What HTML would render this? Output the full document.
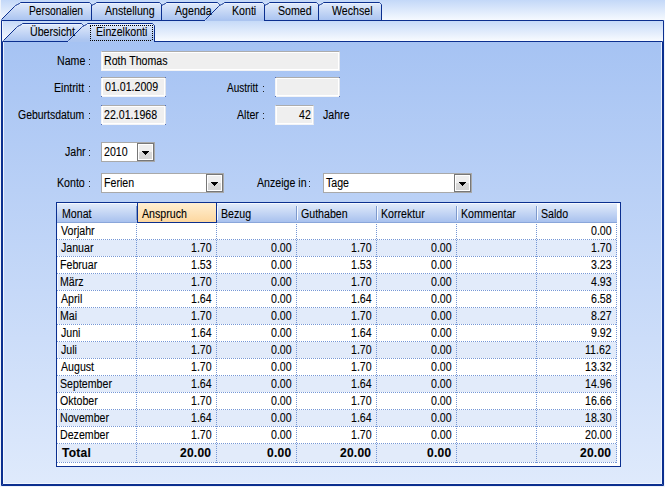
<!DOCTYPE html><html><head><meta charset="utf-8"><style>
*{box-sizing:border-box}
html,body{margin:0;padding:0;width:665px;height:487px;overflow:hidden;background:#dfe9f9}
body{position:relative;font-family:"Liberation Sans",sans-serif;font-size:12px;color:#000}
.t{position:absolute;line-height:13px;white-space:nowrap;transform:scaleX(0.885);transform-origin:0 0;-webkit-text-stroke:0.1px #000}
.abs{position:absolute}
.ro{position:absolute;background:#efefef;border:1px solid #f3f4f6;border-top-color:#acacac;border-right-color:#e2e5ea;box-shadow:inset 1px 1px 0 #fff,inset -1px -1px 0 #fff}
.cb{position:absolute;background:#fff;border:1px solid #a9a9a9}
.btn{position:absolute;top:0;right:0;width:17px;bottom:0;border:1px solid #777;background:linear-gradient(#efefef 0,#efefef 48%,#d9d9d9 52%,#d4d4d4 100%);box-shadow:inset 0 0 0 1px #fff}
.arr{position:absolute;left:4px;width:7px;height:4px}
</style></head><body>
<div class="abs" style="left:0;top:0;width:665px;height:21px;background:linear-gradient(#c3d8f8,#f8fbff)"></div>
<div class="abs" style="left:0;top:21px;width:665px;height:21px;background:linear-gradient(#c6daf8,#fafcff)"></div>
<div class="abs" style="left:0;top:42px;width:665px;height:445px;background:linear-gradient(#a6c3f3,#dfeafc)"></div>
<svg class="abs" style="left:0;top:0" width="665" height="487" viewBox="0 0 665 487"><defs><linearGradient id="tg" x1="0" y1="0" x2="0" y2="1"><stop offset="0" stop-color="#e2ebfb"/><stop offset="1" stop-color="#a9c3f0"/></linearGradient></defs><path d="M304.5,19.5 L317.5,6.5 L318.5,5.5 L320.5,4.5 L322.5,3.5 L323.5,2.5 L379.5,2.5 L380.5,3.5 L381.5,4.5 L381.5,20.5 L304.5,20.5 Z" fill="url(#tg)"/><path d="M323.5,3.5 L378.5,3.5" stroke="#ebf2fd" stroke-width="1" fill="none"/><path d="M304.5,19.5 L317.5,6.5 L318.5,5.5 L320.5,4.5 L322.5,3.5 L323.5,2.5 L379.5,2.5 L380.5,3.5 L381.5,4.5 L381.5,20.5" fill="none" stroke="#0b2f8f" stroke-width="1"/><path d="M250.5,19.5 L263.5,6.5 L264.5,5.5 L266.5,4.5 L268.5,3.5 L269.5,2.5 L316.5,2.5 L317.5,3.5 L318.5,4.5 L318.5,20.5 L250.5,20.5 Z" fill="url(#tg)"/><path d="M269.5,3.5 L315.5,3.5" stroke="#ebf2fd" stroke-width="1" fill="none"/><path d="M250.5,19.5 L263.5,6.5 L264.5,5.5 L266.5,4.5 L268.5,3.5 L269.5,2.5 L316.5,2.5 L317.5,3.5 L318.5,4.5 L318.5,20.5" fill="none" stroke="#0b2f8f" stroke-width="1"/><path d="M147.5,19.5 L160.5,6.5 L161.5,5.5 L163.5,4.5 L165.5,3.5 L166.5,2.5 L217.5,2.5 L218.5,3.5 L219.5,4.5 L219.5,20.5 L147.5,20.5 Z" fill="url(#tg)"/><path d="M166.5,3.5 L216.5,3.5" stroke="#ebf2fd" stroke-width="1" fill="none"/><path d="M147.5,19.5 L160.5,6.5 L161.5,5.5 L163.5,4.5 L165.5,3.5 L166.5,2.5 L217.5,2.5 L218.5,3.5 L219.5,4.5 L219.5,20.5" fill="none" stroke="#0b2f8f" stroke-width="1"/><path d="M77.5,19.5 L90.5,6.5 L91.5,5.5 L93.5,4.5 L95.5,3.5 L96.5,2.5 L159.5,2.5 L160.5,3.5 L161.5,4.5 L161.5,20.5 L77.5,20.5 Z" fill="url(#tg)"/><path d="M96.5,3.5 L158.5,3.5" stroke="#ebf2fd" stroke-width="1" fill="none"/><path d="M77.5,19.5 L90.5,6.5 L91.5,5.5 L93.5,4.5 L95.5,3.5 L96.5,2.5 L159.5,2.5 L160.5,3.5 L161.5,4.5 L161.5,20.5" fill="none" stroke="#0b2f8f" stroke-width="1"/><path d="M1.5,19.5 L14.5,6.5 L15.5,5.5 L17.5,4.5 L19.5,3.5 L20.5,2.5 L89.5,2.5 L90.5,3.5 L91.5,4.5 L91.5,20.5 L1.5,20.5 Z" fill="url(#tg)"/><path d="M20.5,3.5 L88.5,3.5" stroke="#ebf2fd" stroke-width="1" fill="none"/><path d="M1.5,19.5 L14.5,6.5 L15.5,5.5 L17.5,4.5 L19.5,3.5 L20.5,2.5 L89.5,2.5 L90.5,3.5 L91.5,4.5 L91.5,20.5" fill="none" stroke="#0b2f8f" stroke-width="1"/><path d="M205.5,19.5 L218.5,6.5 L219.5,5.5 L221.5,4.5 L223.5,3.5 L224.5,2.5 L262.5,2.5 L263.5,3.5 L264.5,4.5 L264.5,20.5 L205.5,20.5 Z" fill="url(#tg)"/><path d="M224.5,3.5 L261.5,3.5" stroke="#ebf2fd" stroke-width="1" fill="none"/><path d="M205.5,19.5 L218.5,6.5 L219.5,5.5 L221.5,4.5 L223.5,3.5 L224.5,2.5 L262.5,2.5 L263.5,3.5 L264.5,4.5 L264.5,20.5" fill="none" stroke="#0b2f8f" stroke-width="1"/><rect x="206" y="20" width="58" height="1" fill="#abc4f0"/><path d="M205,20.5 L1.5,20.5 L1.5,485.5 L663.5,485.5 L663.5,20.5 L264,20.5" fill="none" stroke="#0b2f8f"/><path d="M2.5,21 L2.5,41" stroke="#eef4fe" fill="none"/><rect x="0" y="0" width="1" height="487" fill="#eef3fb"/><rect x="664" y="20" width="1" height="467" fill="#eef3fb"/><rect x="0" y="486" width="665" height="1" fill="#eef3fb"/><path d="M3.5,40.5 L16.5,27.5 L17.5,26.5 L19.5,25.5 L21.5,24.5 L22.5,23.5 L81.5,23.5 L82.5,24.5 L83.5,25.5 L83.5,41.5 L3.5,41.5 Z" fill="url(#tg)"/><path d="M22.5,24.5 L80.5,24.5" stroke="#ebf2fd" stroke-width="1" fill="none"/><path d="M3.5,40.5 L16.5,27.5 L17.5,26.5 L19.5,25.5 L21.5,24.5 L22.5,23.5 L81.5,23.5 L82.5,24.5 L83.5,25.5 L83.5,41.5" fill="none" stroke="#0b2f8f" stroke-width="1"/><path d="M68.5,40.5 L81.5,27.5 L82.5,26.5 L84.5,25.5 L86.5,24.5 L87.5,23.5 L152.5,23.5 L153.5,24.5 L154.5,25.5 L154.5,41.5 L68.5,41.5 Z" fill="url(#tg)"/><path d="M87.5,24.5 L151.5,24.5" stroke="#ebf2fd" stroke-width="1" fill="none"/><path d="M68.5,40.5 L81.5,27.5 L82.5,26.5 L84.5,25.5 L86.5,24.5 L87.5,23.5 L152.5,23.5 L153.5,24.5 L154.5,25.5 L154.5,41.5" fill="none" stroke="#0b2f8f" stroke-width="1"/><rect x="69" y="41" width="85" height="1" fill="#abc5f1"/><path d="M68,41.5 L2.5,41.5 L2.5,484.5 L662.5,484.5 L662.5,41.5 L154,41.5" fill="none" stroke="#0b2f8f"/><path d="M3.5,42 L3.5,483.5 L661.5,483.5 L661.5,42" fill="none" stroke="#f4f8ff" stroke-opacity="0.85"/><path d="M90,25h1v1h-1z M92,25h1v1h-1z M94,25h1v1h-1z M96,25h1v1h-1z M98,25h1v1h-1z M100,25h1v1h-1z M102,25h1v1h-1z M104,25h1v1h-1z M106,25h1v1h-1z M108,25h1v1h-1z M110,25h1v1h-1z M112,25h1v1h-1z M114,25h1v1h-1z M116,25h1v1h-1z M118,25h1v1h-1z M120,25h1v1h-1z M122,25h1v1h-1z M124,25h1v1h-1z M126,25h1v1h-1z M128,25h1v1h-1z M130,25h1v1h-1z M132,25h1v1h-1z M134,25h1v1h-1z M136,25h1v1h-1z M138,25h1v1h-1z M140,25h1v1h-1z M142,25h1v1h-1z M144,25h1v1h-1z M146,25h1v1h-1z M148,25h1v1h-1z M150,25h1v1h-1z M152,25h1v1h-1z M90,40h1v1h-1z M92,40h1v1h-1z M94,40h1v1h-1z M96,40h1v1h-1z M98,40h1v1h-1z M100,40h1v1h-1z M102,40h1v1h-1z M104,40h1v1h-1z M106,40h1v1h-1z M108,40h1v1h-1z M110,40h1v1h-1z M112,40h1v1h-1z M114,40h1v1h-1z M116,40h1v1h-1z M118,40h1v1h-1z M120,40h1v1h-1z M122,40h1v1h-1z M124,40h1v1h-1z M126,40h1v1h-1z M128,40h1v1h-1z M130,40h1v1h-1z M132,40h1v1h-1z M134,40h1v1h-1z M136,40h1v1h-1z M138,40h1v1h-1z M140,40h1v1h-1z M142,40h1v1h-1z M144,40h1v1h-1z M146,40h1v1h-1z M148,40h1v1h-1z M150,40h1v1h-1z M90,26h1v1h-1z M90,28h1v1h-1z M90,30h1v1h-1z M90,32h1v1h-1z M90,34h1v1h-1z M90,36h1v1h-1z M90,38h1v1h-1z M90,40h1v1h-1z M152,25h1v1h-1z M152,27h1v1h-1z M152,29h1v1h-1z M152,31h1v1h-1z M152,33h1v1h-1z M152,35h1v1h-1z M152,37h1v1h-1z M152,39h1v1h-1z" fill="#000"/></svg>
<div class="abs" style="left:89px;top:59px;width:1px;height:1px;background:#222"></div><div class="abs" style="left:89px;top:64px;width:1px;height:1px;background:#222"></div>
<div class="abs" style="left:89px;top:86px;width:1px;height:1px;background:#222"></div><div class="abs" style="left:89px;top:91px;width:1px;height:1px;background:#222"></div>
<div class="abs" style="left:89px;top:113px;width:1px;height:1px;background:#222"></div><div class="abs" style="left:89px;top:118px;width:1px;height:1px;background:#222"></div>
<div class="abs" style="left:263px;top:86px;width:1px;height:1px;background:#222"></div><div class="abs" style="left:263px;top:91px;width:1px;height:1px;background:#222"></div>
<div class="abs" style="left:263px;top:113px;width:1px;height:1px;background:#222"></div><div class="abs" style="left:263px;top:118px;width:1px;height:1px;background:#222"></div>
<div class="abs" style="left:89px;top:150px;width:1px;height:1px;background:#222"></div><div class="abs" style="left:89px;top:155px;width:1px;height:1px;background:#222"></div>
<div class="abs" style="left:89px;top:181px;width:1px;height:1px;background:#222"></div><div class="abs" style="left:89px;top:186px;width:1px;height:1px;background:#222"></div>
<div class="abs" style="left:309px;top:181px;width:1px;height:1px;background:#222"></div><div class="abs" style="left:309px;top:186px;width:1px;height:1px;background:#222"></div>
<div class="ro" style="left:101px;top:51px;width:239px;height:20px"></div>
<div class="ro" style="left:101px;top:77px;width:65px;height:20px"></div>
<div class="ro" style="left:101px;top:105px;width:65px;height:20px"></div>
<div class="ro" style="left:275px;top:77px;width:65px;height:20px"></div>
<div class="ro" style="left:275px;top:105px;width:39px;height:20px"></div>
<div class="abs" style="left:101px;top:77px;width:1px;height:1px;background:#5470b8"></div>
<div class="abs" style="left:165px;top:77px;width:1px;height:1px;background:#5470b8"></div>
<div class="abs" style="left:101px;top:96px;width:1px;height:1px;background:#5470b8"></div>
<div class="abs" style="left:165px;top:96px;width:1px;height:1px;background:#5470b8"></div>
<div class="abs" style="left:101px;top:105px;width:1px;height:1px;background:#5470b8"></div>
<div class="abs" style="left:165px;top:105px;width:1px;height:1px;background:#5470b8"></div>
<div class="abs" style="left:101px;top:124px;width:1px;height:1px;background:#5470b8"></div>
<div class="abs" style="left:165px;top:124px;width:1px;height:1px;background:#5470b8"></div>
<div class="abs" style="left:275px;top:77px;width:1px;height:1px;background:#5470b8"></div>
<div class="abs" style="left:339px;top:77px;width:1px;height:1px;background:#5470b8"></div>
<div class="abs" style="left:275px;top:96px;width:1px;height:1px;background:#5470b8"></div>
<div class="abs" style="left:339px;top:96px;width:1px;height:1px;background:#5470b8"></div>
<div class="cb" style="left:101px;top:142px;width:54px;height:20px"><div class="btn"><svg class="arr" style="top:7px" width="7" height="4"><path d="M0,0h7v1h-1v1h-1v1h-1v1h-1v-1h-1v-1h-1v-1h-1z" fill="#000"/></svg></div></div>
<div class="cb" style="left:101px;top:173px;width:123px;height:20px"><div class="btn"><svg class="arr" style="top:7px" width="7" height="4"><path d="M0,0h7v1h-1v1h-1v1h-1v1h-1v-1h-1v-1h-1v-1h-1z" fill="#000"/></svg></div></div>
<div class="cb" style="left:323px;top:173px;width:149px;height:20px"><div class="btn"><svg class="arr" style="top:7px" width="7" height="4"><path d="M0,0h7v1h-1v1h-1v1h-1v1h-1v-1h-1v-1h-1v-1h-1z" fill="#000"/></svg></div></div>
<div class="abs" style="left:56px;top:202px;width:565px;height:265px;border:1px solid #0b2f8f;background:#fff"></div>
<div class="abs" style="left:57px;top:203px;width:560px;height:20px;background:linear-gradient(#e3ecfb,#a8c1ee);border-bottom:1px solid #8aa6da;box-shadow:inset 0 1px 0 #f4f8fe"></div>
<div class="abs" style="left:136px;top:206px;width:1px;height:14px;background:#7d99cc"></div>
<div class="abs" style="left:137px;top:206px;width:1px;height:14px;background:#f4f8ff"></div>
<div class="abs" style="left:216px;top:206px;width:1px;height:14px;background:#7d99cc"></div>
<div class="abs" style="left:217px;top:206px;width:1px;height:14px;background:#f4f8ff"></div>
<div class="abs" style="left:296px;top:206px;width:1px;height:14px;background:#7d99cc"></div>
<div class="abs" style="left:297px;top:206px;width:1px;height:14px;background:#f4f8ff"></div>
<div class="abs" style="left:376px;top:206px;width:1px;height:14px;background:#7d99cc"></div>
<div class="abs" style="left:377px;top:206px;width:1px;height:14px;background:#f4f8ff"></div>
<div class="abs" style="left:456px;top:206px;width:1px;height:14px;background:#7d99cc"></div>
<div class="abs" style="left:457px;top:206px;width:1px;height:14px;background:#f4f8ff"></div>
<div class="abs" style="left:536px;top:206px;width:1px;height:14px;background:#7d99cc"></div>
<div class="abs" style="left:537px;top:206px;width:1px;height:14px;background:#f4f8ff"></div>
<div class="abs" style="left:137px;top:202px;width:80px;height:21px;border:1px solid #0b2f8f;background:linear-gradient(#ffefd2,#fdd79f)"></div>
<div class="abs" style="left:57px;top:223px;width:560px;height:16px;background:#ffffff;border-left:1px solid #f6f9fe"></div>
<div class="abs" style="left:57px;top:239px;width:560px;height:1px;background:repeating-linear-gradient(90deg,#7597d6 0,#7597d6 1px,#fff 1px,#fff 2px)"></div>
<div class="abs" style="left:57px;top:240px;width:560px;height:16px;background:#e2ebfa;border-left:1px solid #f6f9fe"></div>
<div class="abs" style="left:57px;top:256px;width:560px;height:1px;background:repeating-linear-gradient(90deg,#7597d6 0,#7597d6 1px,#fff 1px,#fff 2px)"></div>
<div class="abs" style="left:57px;top:257px;width:560px;height:16px;background:#ffffff;border-left:1px solid #f6f9fe"></div>
<div class="abs" style="left:57px;top:273px;width:560px;height:1px;background:repeating-linear-gradient(90deg,#7597d6 0,#7597d6 1px,#fff 1px,#fff 2px)"></div>
<div class="abs" style="left:57px;top:274px;width:560px;height:16px;background:#e2ebfa;border-left:1px solid #f6f9fe"></div>
<div class="abs" style="left:57px;top:290px;width:560px;height:1px;background:repeating-linear-gradient(90deg,#7597d6 0,#7597d6 1px,#fff 1px,#fff 2px)"></div>
<div class="abs" style="left:57px;top:291px;width:560px;height:16px;background:#ffffff;border-left:1px solid #f6f9fe"></div>
<div class="abs" style="left:57px;top:307px;width:560px;height:1px;background:repeating-linear-gradient(90deg,#7597d6 0,#7597d6 1px,#fff 1px,#fff 2px)"></div>
<div class="abs" style="left:57px;top:308px;width:560px;height:16px;background:#e2ebfa;border-left:1px solid #f6f9fe"></div>
<div class="abs" style="left:57px;top:324px;width:560px;height:1px;background:repeating-linear-gradient(90deg,#7597d6 0,#7597d6 1px,#fff 1px,#fff 2px)"></div>
<div class="abs" style="left:57px;top:325px;width:560px;height:16px;background:#ffffff;border-left:1px solid #f6f9fe"></div>
<div class="abs" style="left:57px;top:341px;width:560px;height:1px;background:repeating-linear-gradient(90deg,#7597d6 0,#7597d6 1px,#fff 1px,#fff 2px)"></div>
<div class="abs" style="left:57px;top:342px;width:560px;height:16px;background:#e2ebfa;border-left:1px solid #f6f9fe"></div>
<div class="abs" style="left:57px;top:358px;width:560px;height:1px;background:repeating-linear-gradient(90deg,#7597d6 0,#7597d6 1px,#fff 1px,#fff 2px)"></div>
<div class="abs" style="left:57px;top:359px;width:560px;height:16px;background:#ffffff;border-left:1px solid #f6f9fe"></div>
<div class="abs" style="left:57px;top:375px;width:560px;height:1px;background:repeating-linear-gradient(90deg,#7597d6 0,#7597d6 1px,#fff 1px,#fff 2px)"></div>
<div class="abs" style="left:57px;top:376px;width:560px;height:16px;background:#e2ebfa;border-left:1px solid #f6f9fe"></div>
<div class="abs" style="left:57px;top:392px;width:560px;height:1px;background:repeating-linear-gradient(90deg,#7597d6 0,#7597d6 1px,#fff 1px,#fff 2px)"></div>
<div class="abs" style="left:57px;top:393px;width:560px;height:16px;background:#ffffff;border-left:1px solid #f6f9fe"></div>
<div class="abs" style="left:57px;top:409px;width:560px;height:1px;background:repeating-linear-gradient(90deg,#7597d6 0,#7597d6 1px,#fff 1px,#fff 2px)"></div>
<div class="abs" style="left:57px;top:410px;width:560px;height:16px;background:#e2ebfa;border-left:1px solid #f6f9fe"></div>
<div class="abs" style="left:57px;top:426px;width:560px;height:1px;background:repeating-linear-gradient(90deg,#7597d6 0,#7597d6 1px,#fff 1px,#fff 2px)"></div>
<div class="abs" style="left:57px;top:427px;width:560px;height:16px;background:#ffffff;border-left:1px solid #f6f9fe"></div>
<div class="abs" style="left:57px;top:443px;width:560px;height:1px;background:repeating-linear-gradient(90deg,#7597d6 0,#7597d6 1px,#fff 1px,#fff 2px)"></div>
<div class="abs" style="left:57px;top:444px;width:560px;height:18px;background:#e2ebfa;border-left:1px solid #f6f9fe"></div>
<div class="abs" style="left:57px;top:462px;width:560px;height:1px;background:repeating-linear-gradient(90deg,#7597d6 0,#7597d6 1px,#fff 1px,#fff 2px)"></div>
<div class="abs" style="left:136px;top:224px;width:1px;height:239px;background:repeating-linear-gradient(180deg,#7597d6 0,#7597d6 1px,transparent 1px,transparent 2px)"></div>
<div class="abs" style="left:216px;top:224px;width:1px;height:239px;background:repeating-linear-gradient(180deg,#7597d6 0,#7597d6 1px,transparent 1px,transparent 2px)"></div>
<div class="abs" style="left:296px;top:224px;width:1px;height:239px;background:repeating-linear-gradient(180deg,#7597d6 0,#7597d6 1px,transparent 1px,transparent 2px)"></div>
<div class="abs" style="left:376px;top:224px;width:1px;height:239px;background:repeating-linear-gradient(180deg,#7597d6 0,#7597d6 1px,transparent 1px,transparent 2px)"></div>
<div class="abs" style="left:456px;top:224px;width:1px;height:239px;background:repeating-linear-gradient(180deg,#7597d6 0,#7597d6 1px,transparent 1px,transparent 2px)"></div>
<div class="abs" style="left:536px;top:224px;width:1px;height:239px;background:repeating-linear-gradient(180deg,#7597d6 0,#7597d6 1px,transparent 1px,transparent 2px)"></div>
<div class="abs" style="left:616px;top:224px;width:1px;height:239px;background:repeating-linear-gradient(180deg,#7597d6 0,#7597d6 1px,transparent 1px,transparent 2px)"></div>
<div class="t" style="left:29px;top:5px;transform:scaleX(0.8528);">Personalien</div>
<div class="t" style="left:105px;top:5px;">Anstellung</div>
<div class="t" style="left:175px;top:5px;">Agenda</div>
<div class="t" style="left:232px;top:5px;">Konti</div>
<div class="t" style="left:278px;top:5px;">Somed</div>
<div class="t" style="left:332px;top:5px;">Wechsel</div>
<div class="t" style="left:30px;top:26px;">&Uuml;bersicht</div>
<div class="t" style="left:96px;top:26px;">Einzelkonti</div>
<div class="t" style="left:57px;top:55px;">Name</div>
<div class="t" style="left:54px;top:82px;">Eintritt</div>
<div class="t" style="left:18px;top:109px;transform:scaleX(0.8716);">Geburtsdatum</div>
<div class="t" style="left:227px;top:82px;transform:scaleX(0.8314);">Austritt</div>
<div class="t" style="left:237px;top:109px;">Alter</div>
<div class="t" style="left:323px;top:109px;">Jahre</div>
<div class="t" style="left:65px;top:146px;">Jahr</div>
<div class="t" style="left:57px;top:177px;">Konto</div>
<div class="t" style="left:257px;top:177px;">Anzeige in</div>
<div class="t" style="left:104px;top:55px;">Roth Thomas</div>
<div class="t" style="left:105px;top:81px;">01.01.2009</div>
<div class="t" style="left:104px;top:109px;">22.01.1968</div>
<div class="t" style="left:299px;top:109px;">42</div>
<div class="t" style="left:104px;top:146px;">2010</div>
<div class="t" style="left:104px;top:177px;">Ferien</div>
<div class="t" style="left:326px;top:177px;">Tage</div>
<div class="t" style="left:62px;top:208px;">Monat</div>
<div class="t" style="left:142px;top:208px;">Anspruch</div>
<div class="t" style="left:221px;top:208px;">Bezug</div>
<div class="t" style="left:301px;top:208px;">Guthaben</div>
<div class="t" style="left:381px;top:208px;">Korrektur</div>
<div class="t" style="left:461px;top:208px;">Kommentar</div>
<div class="t" style="left:541px;top:208px;">Saldo</div>
<div class="t" style="left:61px;top:225px;">Vorjahr</div>
<div class="t" style="left:591px;top:225px;">0.00</div>
<div class="t" style="left:61px;top:242px;">Januar</div>
<div class="t" style="left:191px;top:242px;">1.70</div>
<div class="t" style="left:271px;top:242px;">0.00</div>
<div class="t" style="left:351px;top:242px;">1.70</div>
<div class="t" style="left:431px;top:242px;">0.00</div>
<div class="t" style="left:591px;top:242px;">1.70</div>
<div class="t" style="left:60px;top:259px;">Februar</div>
<div class="t" style="left:191px;top:259px;">1.53</div>
<div class="t" style="left:271px;top:259px;">0.00</div>
<div class="t" style="left:351px;top:259px;">1.53</div>
<div class="t" style="left:431px;top:259px;">0.00</div>
<div class="t" style="left:591px;top:259px;">3.23</div>
<div class="t" style="left:60px;top:276px;">M&auml;rz</div>
<div class="t" style="left:191px;top:276px;">1.70</div>
<div class="t" style="left:271px;top:276px;">0.00</div>
<div class="t" style="left:351px;top:276px;">1.70</div>
<div class="t" style="left:431px;top:276px;">0.00</div>
<div class="t" style="left:591px;top:276px;">4.93</div>
<div class="t" style="left:61px;top:293px;">April</div>
<div class="t" style="left:191px;top:293px;">1.64</div>
<div class="t" style="left:271px;top:293px;">0.00</div>
<div class="t" style="left:351px;top:293px;">1.64</div>
<div class="t" style="left:431px;top:293px;">0.00</div>
<div class="t" style="left:591px;top:293px;">6.58</div>
<div class="t" style="left:60px;top:310px;">Mai</div>
<div class="t" style="left:191px;top:310px;">1.70</div>
<div class="t" style="left:271px;top:310px;">0.00</div>
<div class="t" style="left:351px;top:310px;">1.70</div>
<div class="t" style="left:431px;top:310px;">0.00</div>
<div class="t" style="left:591px;top:310px;">8.27</div>
<div class="t" style="left:61px;top:327px;">Juni</div>
<div class="t" style="left:191px;top:327px;">1.64</div>
<div class="t" style="left:271px;top:327px;">0.00</div>
<div class="t" style="left:351px;top:327px;">1.64</div>
<div class="t" style="left:431px;top:327px;">0.00</div>
<div class="t" style="left:591px;top:327px;">9.92</div>
<div class="t" style="left:61px;top:344px;">Juli</div>
<div class="t" style="left:191px;top:344px;">1.70</div>
<div class="t" style="left:271px;top:344px;">0.00</div>
<div class="t" style="left:351px;top:344px;">1.70</div>
<div class="t" style="left:431px;top:344px;">0.00</div>
<div class="t" style="left:585px;top:344px;">11.62</div>
<div class="t" style="left:61px;top:361px;">August</div>
<div class="t" style="left:191px;top:361px;">1.70</div>
<div class="t" style="left:271px;top:361px;">0.00</div>
<div class="t" style="left:351px;top:361px;">1.70</div>
<div class="t" style="left:431px;top:361px;">0.00</div>
<div class="t" style="left:585px;top:361px;">13.32</div>
<div class="t" style="left:60px;top:378px;">September</div>
<div class="t" style="left:191px;top:378px;">1.64</div>
<div class="t" style="left:271px;top:378px;">0.00</div>
<div class="t" style="left:351px;top:378px;">1.64</div>
<div class="t" style="left:431px;top:378px;">0.00</div>
<div class="t" style="left:585px;top:378px;">14.96</div>
<div class="t" style="left:60px;top:395px;">Oktober</div>
<div class="t" style="left:191px;top:395px;">1.70</div>
<div class="t" style="left:271px;top:395px;">0.00</div>
<div class="t" style="left:351px;top:395px;">1.70</div>
<div class="t" style="left:431px;top:395px;">0.00</div>
<div class="t" style="left:585px;top:395px;">16.66</div>
<div class="t" style="left:60px;top:412px;">November</div>
<div class="t" style="left:191px;top:412px;">1.64</div>
<div class="t" style="left:271px;top:412px;">0.00</div>
<div class="t" style="left:351px;top:412px;">1.64</div>
<div class="t" style="left:431px;top:412px;">0.00</div>
<div class="t" style="left:585px;top:412px;">18.30</div>
<div class="t" style="left:60px;top:429px;">Dezember</div>
<div class="t" style="left:191px;top:429px;">1.70</div>
<div class="t" style="left:271px;top:429px;">0.00</div>
<div class="t" style="left:351px;top:429px;">1.70</div>
<div class="t" style="left:431px;top:429px;">0.00</div>
<div class="t" style="left:585px;top:429px;">20.00</div>
<div class="t" style="left:62px;top:447px;font-weight:bold;letter-spacing:0.25px;transform:scaleX(1);">Total</div>
<div class="t" style="left:180px;top:447px;font-weight:bold;letter-spacing:0.25px;transform:scaleX(1);">20.00</div>
<div class="t" style="left:267px;top:447px;font-weight:bold;letter-spacing:0.25px;transform:scaleX(1);">0.00</div>
<div class="t" style="left:340px;top:447px;font-weight:bold;letter-spacing:0.25px;transform:scaleX(1);">20.00</div>
<div class="t" style="left:427px;top:447px;font-weight:bold;letter-spacing:0.25px;transform:scaleX(1);">0.00</div>
<div class="t" style="left:580px;top:447px;font-weight:bold;letter-spacing:0.25px;transform:scaleX(1);">20.00</div>
</body></html>
